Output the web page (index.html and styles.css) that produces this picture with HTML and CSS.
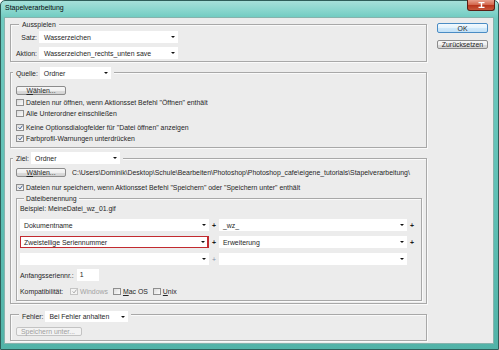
FILE: index.html
```html
<!DOCTYPE html>
<html lang="de">
<head>
<meta charset="utf-8">
<title>Stapelverarbeitung</title>
<link rel="stylesheet" href="styles.css">
</head>
<body>
<div class="window">
  <div class="titlebar">
    <span class="title">Stapelverarbeitung</span>
    <span class="close"><svg width="9" height="6" viewBox="0 0 9 6"><path d="M1.5 0.5h6M1.5 5.5h6M4.5 0.5v5" stroke="#fff" stroke-width="1.4" fill="none"/></svg></span>
  </div>
  <div class="client">
    <div class="main">
      <div class="group g-play">
        <div class="legend lg-play"><span>Ausspielen</span></div>
        <div class="form-grid">
          <span class="flabel">Satz:</span>
          <div class="select s-139"><span>Wasserzeichen</span><i class="arrow"></i></div>
          <span class="flabel">Aktion:</span>
          <div class="select s-139"><span>Wasserzeichen_rechts_unten save</span><i class="arrow"></i></div>
        </div>
      </div>

      <div class="group g-src">
        <div class="legend lg-src"><span>Quelle:</span><div class="select s-71"><span>Ordner</span><i class="arrow"></i></div></div>
        <button class="btn b-choose"><span><u>W</u>ählen...</span></button>
        <div class="check c-first"><span class="box"></span><span>Dateien nur öffnen, wenn Aktionsset Befehl "Öffnen" enthält</span></div>
        <div class="check"><span class="box"></span><span>Alle Unterordner einschließen</span></div>
        <div class="check c-gap"><span class="box on"><svg width="5" height="5" viewBox="0 0 5 5"><path d="M0.6 2.4L2 3.9L4.5 0.6" stroke="#3a5a8c" stroke-width="1" fill="none"/></svg></span><span>Keine Optionsdialogfelder für "Datei öffnen" anzeigen</span></div>
        <div class="check"><span class="box on"><svg width="5" height="5" viewBox="0 0 5 5"><path d="M0.6 2.4L2 3.9L4.5 0.6" stroke="#3a5a8c" stroke-width="1" fill="none"/></svg></span><span>Farbprofil-Warnungen unterdrücken</span></div>
      </div>

      <div class="group g-dest">
        <div class="legend lg-dest"><span>Ziel:</span><div class="select s-89"><span>Ordner</span><i class="arrow"></i></div></div>
        <div class="pathrow">
          <button class="btn b-choose"><span><u>W</u>ählen...</span></button>
          <span class="path">C:\Users\Dominik\Desktop\Schule\Bearbeiten\Photoshop\Photoshop_cafe\eigene_tutorials\Stapelverarbeitung\</span>
        </div>
        <div class="check c-save"><span class="box on"><svg width="5" height="5" viewBox="0 0 5 5"><path d="M0.6 2.4L2 3.9L4.5 0.6" stroke="#3a5a8c" stroke-width="1" fill="none"/></svg></span><span>Dateien nur speichern, wenn Aktionsset Befehl "Speichern" oder "Speichern unter" enthält</span></div>

        <div class="subgroup">
          <div class="legend lg-name"><span>Dateibenennung</span></div>
          <div class="example">Beispiel: MeineDatei_wz_01.gif</div>
          <div class="namerow r-first">
            <div class="select s-189"><span>Dokumentname</span><i class="arrow"></i></div>
            <span class="plus">+</span>
            <div class="select s-188"><span>_wz_</span><i class="arrow"></i></div>
            <span class="plus">+</span>
          </div>
          <div class="namerow">
            <div class="select s-189 s-error"><span>Zweistellige Seriennummer</span><i class="arrow"></i></div>
            <span class="plus">+</span>
            <div class="select s-188"><span>Erweiterung</span><i class="arrow"></i></div>
            <span class="plus">+</span>
          </div>
          <div class="namerow">
            <div class="select s-189"><span></span><i class="arrow"></i></div>
            <span class="plus faded">+</span>
            <div class="select s-188"><span></span><i class="arrow"></i></div>
          </div>
          <div class="serial">
            <span>Anfangsseriennr.:</span>
            <span class="input">1</span>
          </div>
          <div class="compat">
            <span class="clabel">Kompatibilität:</span>
            <span class="opt"><span class="box on disabled"><svg width="5" height="5" viewBox="0 0 5 5"><path d="M0.6 2.4L2 3.9L4.5 0.6" stroke="#a8a8a8" stroke-width="1" fill="none"/></svg></span><span class="dis">Windows</span></span>
            <span class="opt"><span class="box"></span><span><u>M</u>ac OS</span></span>
            <span class="opt"><span class="box"></span><span><u>U</u>nix</span></span>
          </div>
        </div>
      </div>

      <div class="group g-err">
        <div class="legend lg-err"><span>Fehler:</span><div class="select s-83 s-short"><span>Bei Fehler anhalten</span><i class="arrow"></i></div></div>
        <button class="btn b-saveas" disabled><span>Speichern unter...</span></button>
      </div>
    </div>

    <div class="side">
      <button class="btn b-ok"><span>OK</span></button>
      <button class="btn b-reset"><span>Zurücksetzen</span></button>
    </div>
  </div>
</div>
</body>
</html>
```
FILE: styles.css
```css
* { box-sizing: border-box; }
html, body { margin: 0; padding: 0; }
body {
  width: 499px;
  height: 350px;
  overflow: hidden;
  background: #fff;
  font-family: "Liberation Sans", Arial, sans-serif;
  font-size: 6.9px;
  color: #262626;
}

.window {
  width: 499px;
  height: 350px;
  border: 1px solid #2f5e59;
  border-radius: 5px 5px 0 0;
  background: linear-gradient(180deg, #a6e0d9 0px, #86d5cc 10px, #6fcac0 17px, #5ebfb4 60%, #52b3a8 100%);
  display: flex;
  flex-direction: column;
  padding: 0 4px 5px 3px;
}

.titlebar {
  height: 16px;
  display: flex;
  justify-content: space-between;
  align-items: flex-start;
}
.title {
  font-size: 7px;
  color: #0a0a0a;
  margin: 3px 0 0 1px;
  line-height: 8px;
}
.close {
  width: 28px;
  height: 11px;
  margin: -1px -1px 0 0;
  border: 1px solid #5a1d14;
  border-top: none;
  border-radius: 0 0 3px 3px;
  background: linear-gradient(180deg, #e8a08c 0%, #d46a50 45%, #b8361c 55%, #c8583a 100%);
  display: flex;
  align-items: center;
  justify-content: center;
}

.client {
  flex: 1;
  background: #ececec;
  border: 1px solid #86b3ad;
  display: flex;
  align-items: flex-start;
}

.main {
  padding-left: 5px;
  display: flex;
  flex-direction: column;
}

.group {
  width: 417px;
  border: 1px solid #a8a8a8;
  box-shadow: inset 1px 1px 0 #fafafa, 1px 1px 0 #fafafa;
  display: flex;
  flex-direction: column;
  align-items: flex-start;
}
.legend {
  display: flex;
  align-items: center;
  gap: 2px;
  background: #ececec;
  padding: 0 3px;
  white-space: nowrap;
}

.g-play { margin-top: 6px; padding-bottom: 2px; }
.lg-play { margin: -6px 0 0 8px; height: 10px; }
.form-grid {
  margin-top: 2px;
  display: grid;
  grid-template-columns: 26px 139px;
  column-gap: 2px;
  row-gap: 4px;
  align-items: center;
}
.flabel { text-align: right; white-space: nowrap; }

.g-src { margin-top: 10px; padding-bottom: 3px; }
.lg-src { margin: -6px 0 0 2px; height: 12px; }

.g-dest { margin-top: 10px; padding-bottom: 2px; }
.lg-dest { margin: -7px 0 0 2px; height: 12px; }

.g-err { margin-top: 10px; padding-bottom: 4px; }
.lg-err { margin: -4px 0 0 8px; height: 11px; }

.select {
  display: flex;
  align-items: center;
  justify-content: space-between;
  height: 12px;
  background: #fff;
  padding: 0 3px 0 4px;
  white-space: nowrap;
}
.s-short { height: 11px; }
.arrow {
  width: 0;
  height: 0;
  border-left: 2px solid transparent;
  border-right: 2px solid transparent;
  border-top: 2px solid #111;
}
.s-139 { width: 139px; padding-left: 5px; }
.s-71 { width: 71px; }
.s-89 { width: 89px; }
.s-83 { width: 83px; }
.s-189 { width: 189px; }
.s-188 { width: 188px; }
.s-error { border: 1px solid #c22a2f; border-right-width: 2px; padding-left: 3px; padding-right: 2px; }

.btn {
  appearance: none;
  margin: 0;
  padding: 0;
  font: inherit;
  color: #262626;
  height: 9px;
  border: 1px solid #8c8c8c;
  border-radius: 2px;
  background: linear-gradient(180deg, #f7f7f7 0%, #f0f0f0 50%, #dcdcdc 51%, #d3d3d3 100%);
  display: flex;
  align-items: center;
  justify-content: center;
  line-height: 7px;
  white-space: nowrap;
}
.b-choose { width: 50px; margin: 7px 0 0 5px; }

.check {
  display: flex;
  align-items: center;
  gap: 2px;
  height: 11px;
  margin-left: 5px;
  white-space: nowrap;
}
.c-first { margin-top: 2px; }
.c-gap { margin-top: 3px; }
.box {
  width: 8px;
  height: 7px;
  border: 1px solid #8e8e8e;
  background: linear-gradient(135deg, #dcdcdc, #fbfbfb);
  display: flex;
  align-items: center;
  justify-content: center;
  flex: none;
}
.box.disabled { border-color: #c4c4c4; background: #f4f4f4; }

.pathrow {
  display: flex;
  align-items: center;
  margin-top: 4px;
}
.pathrow .b-choose { margin: 0 0 0 5px; }
.path {
  margin-left: 6px;
  white-space: nowrap;
}
.c-save { margin-top: 5px; }

.subgroup {
  width: 406px;
  margin: 5px 0 0 5px;
  border: 1px solid #a8a8a8;
  box-shadow: inset 1px 1px 0 #fafafa, 1px 1px 0 #fafafa;
  padding: 0 0 4px 3px;
  display: flex;
  flex-direction: column;
  align-items: flex-start;
}
.lg-name { margin: -5px 0 0 4px; height: 9px; padding: 0 2px; }
.example { margin-top: 1px; height: 10px; line-height: 10px; }
.namerow {
  display: flex;
  align-items: center;
  margin-top: 5px;
}
.r-first { margin-top: 5px; }
.plus {
  width: 10px;
  text-align: center;
  font-weight: bold;
  color: #1a1a1a;
}
.plus.faded { color: #7f8ea6; font-weight: normal; }

.serial {
  display: flex;
  align-items: center;
  gap: 3px;
  margin-top: 4px;
  white-space: nowrap;
}
.input {
  width: 22px;
  height: 12px;
  background: #fff;
  padding-left: 3px;
  line-height: 12px;
}
.compat {
  display: flex;
  align-items: center;
  height: 10px;
  margin-top: 5px;
  white-space: nowrap;
}
.clabel { width: 50px; }
.opt { display: flex; align-items: center; gap: 2px; margin-right: 5px; }
.dis { color: #a3a3a3; }

.b-saveas {
  width: 66px;
  margin: 5px 0 0 5px;
  color: #a0a0a0;
  border-color: #c3c3c3;
  background: #f3f3f3;
  justify-content: flex-start;
  padding-left: 4px;
}

.side {
  margin: 5px 0 0 10px;
  display: flex;
  flex-direction: column;
  gap: 7px;
}
.b-ok {
  width: 51px;
  height: 10px;
  border-color: #4a8cc4;
  background: linear-gradient(180deg, #f2f9fe 0%, #e3f2fc 50%, #cfe8fa 51%, #c2e1f7 100%);
}
.b-reset { width: 51px; height: 9px; }
```
